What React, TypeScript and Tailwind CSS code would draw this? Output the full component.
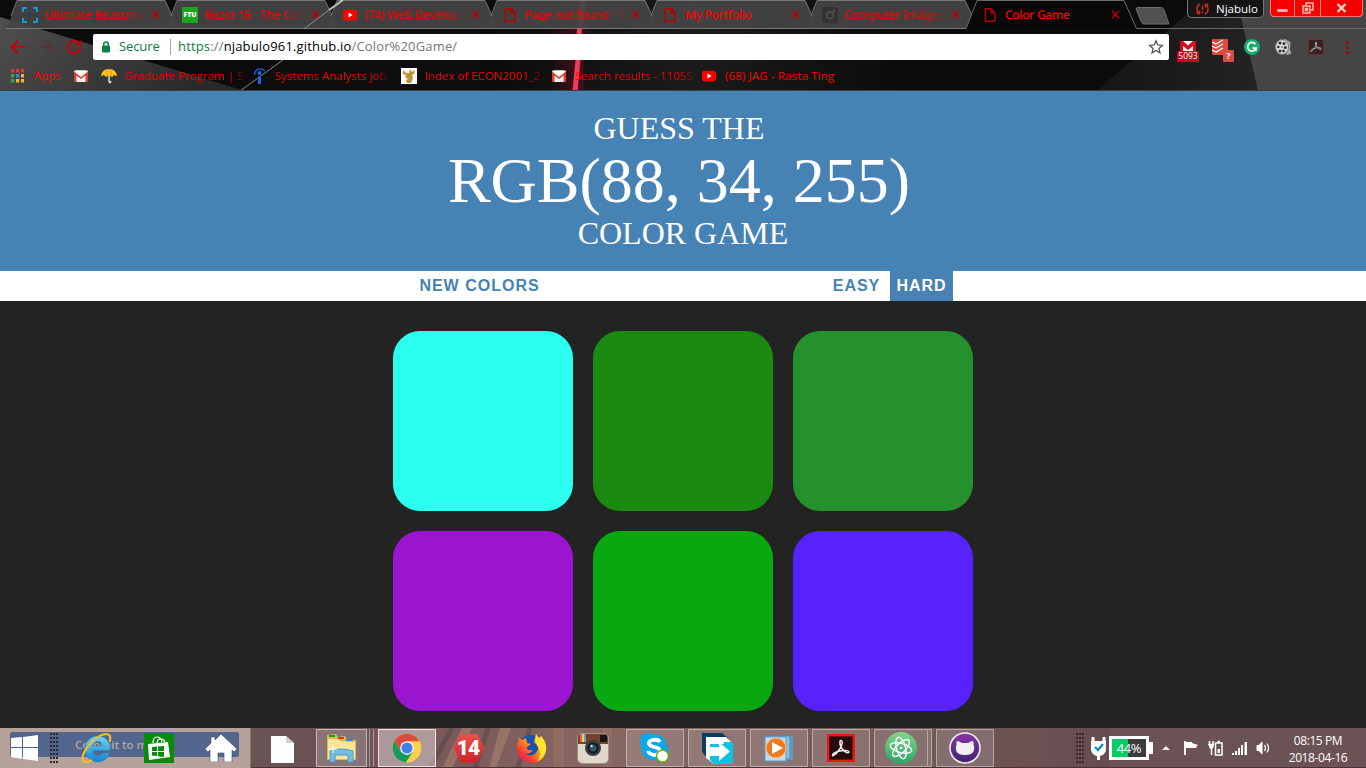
import React from "react";

const ui = "font-['Open_Sans','Noto_Sans',sans-serif]";

/* ---------- browser artwork ---------- */

function ThemeArt() {
  return (
    <svg className="absolute inset-0" width="1366" height="91" viewBox="0 0 1366 91" aria-hidden="true">
      <defs>
        <linearGradient id="leftShade" x1="0" x2="1" y1="0" y2="0.3">
          <stop offset="0" stopColor="#505050" />
          <stop offset="1" stopColor="#292929" />
        </linearGradient>
        <linearGradient id="midShade" x1="0" x2="1">
          <stop offset="0" stopColor="#0c0b0b" />
          <stop offset="0.5" stopColor="#1b1b1b" />
          <stop offset="1" stopColor="#0b0b0b" />
        </linearGradient>
        <linearGradient id="rightShade" x1="0" x2="1">
          <stop offset="0" stopColor="#151515" />
          <stop offset="1" stopColor="#2c2c2c" />
        </linearGradient>
        <linearGradient id="glow" x1="0" x2="1">
          <stop offset="0" stopColor="#a0001c" stopOpacity="0" />
          <stop offset="0.75" stopColor="#a00820" stopOpacity="0.35" />
          <stop offset="1" stopColor="#500814" stopOpacity="0" />
        </linearGradient>
      </defs>
      <rect width="1366" height="91" fill="#0c0b0b" />
      <path d="M0 17 L245 91 H0Z" fill="url(#leftShade)" />
      <path d="M245 91 L330 26 H480 V91Z" fill="#0e0e0e" />
      <path d="M480 0H860L910 91H480Z" fill="url(#midShade)" />
      <path d="M1204 0 H1366 V91 H1096Z" fill="url(#rightShade)" />
      <path d="M1237 0 H1366 V91 H1258Z" fill="#454545" />
      <path d="M548 0H592V34H548ZM555 60H584V91H550Z" fill="url(#glow)" />
      <path d="M583 0 L579 34 M578 60 L575 91" stroke="#ee3c5c" strokeWidth="5" />
      <path d="M329 10 L304 29" stroke="#a9a9a9" />
      <path d="M283 60 L240 91" stroke="#8a8a8a" />
      <path d="M0 90.5H1366" stroke="#2e4558" />
    </svg>
  );
}

function PageIcon() {
  return (
    <svg width="16" height="16" viewBox="0 0 16 16" fill="none" stroke="#b50000" strokeWidth="1.4">
      <path d="M3.2 1.7H9.3L12.8 5.5V14.3H3.2ZM9 2V6H12.6" />
    </svg>
  );
}
function YouTubeIcon() {
  return (
    <svg width="16" height="16" viewBox="0 0 16 16">
      <rect x="1" y="2.8" width="14" height="10.6" rx="2.6" fill="#f00" />
      <path d="M6.5 5.6 10.6 8.1 6.5 10.6Z" fill="#fff" />
    </svg>
  );
}
function GmailIcon() {
  return (
    <svg width="16" height="16" viewBox="0 0 16 16">
      <rect x="1" y="2.5" width="14" height="11.5" rx="1" fill="#eee" />
      <path d="M1 3.5 8 9.2 15 3.5V14H12.6V7.4L8 11 3.4 7.4V14H1Z" fill="#dc3a32" />
      <path d="M2.5 2.6 8 7 13.5 2.6Z" fill="#fff" />
    </svg>
  );
}
function BracketIcon() {
  return (
    <svg width="16" height="16" viewBox="0 0 16 16" fill="none" stroke="#129bd3" strokeWidth="2">
      <path d="M1 5V1H5M11 1H15V5M15 11V15H11M5 15H1V11" />
      <path d="M6 5 11 8 6 11Z" fill="#213f63" stroke="none" />
    </svg>
  );
}
function FtuIcon() {
  return (
    <span className="flex h-4 w-4 items-center justify-center bg-[#18a51d] text-[7px] font-extrabold leading-none text-white">
      FTU
    </span>
  );
}
function DimCameraIcon() {
  return (
    <svg width="16" height="16" viewBox="0 0 16 16" fill="none">
      <rect width="16" height="16" rx="3" fill="#333" />
      <circle cx="8" cy="8.3" r="3.2" stroke="#515151" strokeWidth="1.6" />
      <path d="M11 3h2v2h-2z" fill="#515151" />
    </svg>
  );
}

interface TabInfo {
  title: string;
  icon: React.ReactNode;
  fade?: boolean;
}
const tabs: TabInfo[] = [
  { title: "Ultimate Beastmas", icon: <BracketIcon />, fade: true },
  { title: "React 16 - The Con", icon: <FtuIcon />, fade: true },
  { title: "(74) Web Develop", icon: <YouTubeIcon />, fade: true },
  { title: "Page not found · G", icon: <PageIcon />, fade: true },
  { title: "My Portfolio", icon: <PageIcon /> },
  { title: "Computer Images", icon: <DimCameraIcon />, fade: true },
];

function CloseMark() {
  return (
    <svg width="9" height="9" viewBox="0 0 9 9" stroke="#c00000" strokeWidth="1.4">
      <path d="M.8.8 8.2 8.2M8.2.8.8 8.2" />
    </svg>
  );
}

function Tab({ tab, active }: { tab: TabInfo; active?: boolean }) {
  return (
    <div className="relative h-[29px] w-40 shrink-0">
      <svg className="absolute -left-px top-0 overflow-visible" width="174" height="29" viewBox="0 0 174 29" fill="none">
        {active ? (
          <>
            <path d="M1 29 12 .5H159L171.5 29Z" fill="#090909" />
            <path d="M1 28.5 12 .5H159L171.5 28.5H402" stroke="#6a6a6a" />
          </>
        ) : (
          <>
            <path d="M5 20 12.5 .5H160L166 14.5 171 28.5H1Z" fill="#454545" fillOpacity="0.93" />
            <path d="M6 16 12 .5H160L173 28.5H1" stroke="#777" />
          </>
        )}
      </svg>
      <div className="relative flex h-[29px] items-center pl-4">
        <span className="flex w-[23px]">{tab.icon}</span>
        <span
          className={`w-[106px] whitespace-nowrap font-['Noto_Sans','Open_Sans',sans-serif] text-[12px] font-medium leading-4 tracking-[-0.3px] text-[#ff0000] [font-stretch:87.5%] [text-rendering:geometricPrecision] ${tab.fade ? "[mask-image:linear-gradient(to_right,#000_74%,transparent_96%)]" : ""}`}
        >
          {tab.title}
        </span>
        <span>
          <CloseMark />
        </span>
      </div>
    </div>
  );
}

function WindowControls() {
  return (
    <div className="absolute right-0 top-0 flex items-start">
      <div className="flex h-[18px] w-[77px] items-center rounded-b-[5px] border border-t-0 border-[#777] bg-[#151515] pl-[7px] text-[11.5px] text-white">
        <svg width="15" height="14" viewBox="0 0 15 14" fill="none" stroke="#d02b20" strokeWidth="1.5">
          <path d="M5 2C1 4 1 9 4 11.5M1.5 11.5H4.5V8.5M10 12C14 10 14 5 11 2.5M13.5 2.5H10.5V5.5M7.5 3.5V8M7.5 9.5V11" />
        </svg>
        <span className="ml-[6px]">Njabulo</span>
      </div>
      <div className="ml-[6px] mr-[3px] flex h-[17px] w-[93px] overflow-hidden rounded-b-[4px] border border-t-0 border-[#ff7770] bg-[#f80000]">
        <span className="flex w-6 items-center justify-center border-r border-[#ff8a84] pt-1">
          <span className="h-[3px] w-[11px] rounded-sm bg-[#ffb4a8]" />
        </span>
        <span className="flex w-[26px] items-center justify-center border-r border-[#ff8a84]">
          <svg width="12" height="12" viewBox="0 0 12 12" fill="none" stroke="#ffc2b5" strokeWidth="1.5">
            <path d="M4 3.5V1H11V8H8.5" />
            <path d="M1 4H8V11H1ZM3.5 6.5H5.5V8.5H3.5Z" />
          </svg>
        </span>
        <span className="flex flex-1 items-center justify-center">
          <svg width="11" height="10" viewBox="0 0 11 10" stroke="#ffd4cb" strokeWidth="2.4">
            <path d="M1.5 1 9.5 9M9.5 1 1.5 9" />
          </svg>
        </span>
      </div>
    </div>
  );
}

function Extensions() {
  return (
    <div className="flex h-[26px] flex-1 items-center">
      <div className="relative ml-[8px] flex h-[22px] w-[22px] flex-col items-center">
        <svg className="mt-[5px]" width="16" height="11" viewBox="0 0 16 11">
          <path d="M0 0H16V11H0Z" fill="#eee" />
          <path d="M0 0H3L8 4.5 13 0H16V11H13V5L8 9 3 5V11H0Z" fill="#d20d22" />
        </svg>
        <span className="absolute left-0 top-[15px] flex h-[11px] w-[22px] items-center justify-center rounded-[1px] bg-[#cf0018] text-[8.5px] leading-none text-white">
          5093
        </span>
      </div>
      <div className="relative ml-[13px] h-[22px] w-[22px]">
        <svg className="mt-[3px]" width="16" height="16" viewBox="0 0 16 16" fill="none">
          <rect width="16" height="16" rx="1" fill="#df493e" />
          <path d="M0 3 4 5 11 1M0 7 4 9 11 5M0 11 4 13 11 9" stroke="#fff" strokeWidth="1.3" />
        </svg>
        <span className="absolute left-[11px] top-[14px] flex h-[12px] w-[11px] items-center justify-center rounded-[1px] bg-[#dc4d43] text-[8px] font-bold text-white">
          ?
        </span>
      </div>
      <svg className="ml-[10px]" width="16" height="16" viewBox="0 0 16 16" fill="none">
        <circle cx="8" cy="8" r="8" fill="#16ae6d" />
        <path d="M11.4 5.2A4.3 4.3 0 1 0 12 9.2H8.5M11.9 9V12" stroke="#fff" strokeWidth="1.7" />
      </svg>
      <svg className="ml-[15px]" width="17" height="16" viewBox="0 0 17 16" fill="none">
        <path d="M9 1 14 4 13 14 16 13" stroke="#aaa" strokeWidth="3" />
        <ellipse cx="7" cy="8" rx="6.5" ry="7.4" fill="#ddd" stroke="#777" />
        <g fill="#333">
          <circle cx="5" cy="4" r="1.5" />
          <circle cx="9" cy="4.5" r="1.5" />
          <circle cx="3.3" cy="8" r="1.3" />
          <circle cx="10.4" cy="8.5" r="1.5" />
          <circle cx="5" cy="12" r="1.5" />
          <circle cx="8.5" cy="12" r="1.4" />
          <circle cx="7" cy="8" r=".8" />
        </g>
      </svg>
      <svg className="ml-[16px]" width="16" height="16" viewBox="0 0 24 24" fill="none">
        <rect x=".8" y=".8" width="22.4" height="22.4" fill="#352323" stroke="#7c2c28" strokeWidth="1.5" />
        <path d="M11 5C14 3 13 9 10 13 7 18 3 21 4 17 6 14 20 11 20 15 19 18 11 11 11 5Z" stroke="#aaa" strokeWidth="1.5" />
      </svg>
      <div className="ml-[22px] flex flex-col gap-[2px]">
        <i className="h-[3px] w-[3px] rounded-full bg-[#b00000]" />
        <i className="h-[3px] w-[3px] rounded-full bg-[#b00000]" />
        <i className="h-[3px] w-[3px] rounded-full bg-[#b00000]" />
      </div>
    </div>
  );
}

function Toolbar() {
  return (
    <div className="relative mt-[5px] flex h-[26px] items-center">
      <div className="flex w-[93px] items-center pl-[10px]">
        <svg width="16" height="16" viewBox="0 0 16 16" fill="none" stroke="#c80000" strokeWidth="2">
          <path d="M15 8H2M8 1.5 1.7 8 8 14.5" />
        </svg>
        <svg className="ml-3 opacity-30" width="16" height="16" viewBox="0 0 16 16" fill="none" stroke="#8a1010" strokeWidth="1.8">
          <path d="M1 8H14M8 1.5 14.3 8 8 14.5" />
        </svg>
        <svg className="ml-3" width="16" height="16" viewBox="0 0 16 16" fill="none" stroke="#c80000" strokeWidth="2">
          <path d="M13.3 4.7A6.2 6.2 0 1 0 14.2 9.3" />
          <path d="M15 1V7H9Z" fill="#c80000" stroke="none" />
        </svg>
      </div>
      <div className="flex h-[26px] w-[1076px] items-center rounded-[2px] bg-white pl-[8px] pr-[5px] text-[13px]">
        <svg width="10" height="12" viewBox="0 0 10 12" fill="none">
          <rect x="1" y="4.5" width="8" height="7" rx="1" fill="#0b8043" />
          <path d="M2.7 5V3.2a2.3 2.3 0 0 1 4.6 0V5" stroke="#0b8043" strokeWidth="1.5" />
        </svg>
        <span className="ml-[8px] w-[42px] tracking-[-0.1px] text-[#0b8043]">Secure</span>
        <span className="ml-[9px] mr-[7px] h-4 w-px bg-[#aaa]" />
        <span className="whitespace-nowrap tracking-[0.16px] text-[#777]">
          <span className="text-[#0b8043]">https</span>://<span className="text-black">njabulo961.github.io</span>/Color%20Game/
        </span>
        <svg className="ml-auto" width="16" height="16" viewBox="0 0 16 16" fill="none" stroke="#555" strokeWidth="1.3">
          <path d="M8 1.8 9.8 6 14.4 6.4 10.9 9.4 12 13.9 8 11.5 4 13.9 5.1 9.4 1.6 6.4 6.2 6Z" />
        </svg>
      </div>
      <Extensions />
    </div>
  );
}

function AppsIcon() {
  const colors = ["#dc3b32", "#dc3b32", "#dc3b32", "#27a65a", "#3f81d8", "#f0b42d", "#27a65a", "#f0b42d", "#f0b42d"];
  return (
    <svg width="13" height="14" viewBox="0 0 13 14">
      {colors.map((c, i) => (
        <rect key={i} x={(i % 3) * 5} y={Math.floor(i / 3) * 5} width="3.3" height="3.5" fill={c} />
      ))}
    </svg>
  );
}

function Bookmark({ icon, label, width, fade }: { icon: React.ReactNode; label?: string; width: string; fade?: boolean }) {
  return (
    <div className={`flex shrink-0 items-center ${width}`}>
      <span className="flex w-6 shrink-0">{icon}</span>
      {label && (
        <span className={`whitespace-nowrap ${fade ? "[mask-image:linear-gradient(to_right,#000_88%,transparent_104%)]" : ""}`}>
          {label}
        </span>
      )}
    </div>
  );
}

function BookmarksBar() {
  return (
    <div className="relative flex h-8 items-center pl-[11px] text-[11.5px] text-[#ff0000]">
      <div className="flex w-[62px] items-center">
        <AppsIcon />
        <span className="ml-[10px]">Apps</span>
      </div>
      <Bookmark width="w-7" icon={<GmailIcon />} />
      <Bookmark
        width="w-[150px]"
        label="Graduate Program | S"
        fade
        icon={
          <svg width="16" height="16" viewBox="0 0 16 16" fill="none">
            <path d="M8 4V13.5Q9 16 10 13" stroke="#ddd" strokeWidth="1.5" />
            <path d="M0 8Q1 1 8 1 15 1 16 8L13 7 11 9 8 7 5 9 3 7Z" fill="#ffc619" />
            <path d="M5 9Q5 3 8 1 11 3 11 9" stroke="#f39a0a" />
          </svg>
        }
      />
      <Bookmark
        width="w-[150px]"
        label="Systems Analysts job"
        fade
        icon={
          <svg width="16" height="16" viewBox="0 0 16 16" fill="none">
            <path d="M3.5 7Q4 1 9 1 12 1 14 3" stroke="#1455cb" strokeWidth="1.6" />
            <circle cx="8.5" cy="5" r="2" fill="#2164f3" />
            <path d="M7 8Q8.5 9 10 8V16H7Z" fill="#2164f3" />
          </svg>
        }
      />
      <Bookmark
        width="w-[150px]"
        label="Index of ECON2001_2"
        fade
        icon={
          <svg width="16" height="16" viewBox="0 0 16 16">
            <rect width="16" height="16" fill="#fff" />
            <path d="M2 2 5 5H8L9 1 11 4 14 2 13 6 11 7 12 10 10 15H6L5 12 7 11 4 9 5 7 2 6Z" fill="#bd923a" />
          </svg>
        }
      />
      <Bookmark width="w-[150px]" label="Search results - 11055" fade icon={<GmailIcon />} />
      <div className="tracking-[0.15px]">
        <Bookmark width="w-[150px]" label="(68) JAG - Rasta Ting" icon={<YouTubeIcon />} />
      </div>
    </div>
  );
}

function BrowserChrome() {
  return (
    <div className={`relative h-[91px] overflow-hidden ${ui}`}>
      <ThemeArt />
      <div className="relative flex h-[29px] pl-[6px]">
        {tabs.map((t) => (
          <Tab key={t.title} tab={t} />
        ))}
        <Tab active tab={{ title: "Color Game", icon: <PageIcon /> }} />
        <svg className="ml-[9px] mt-[7px]" width="35" height="18" viewBox="0 0 35 18">
          <path d="M2 .5H26Q28 .5 29 3L34 17H9Q7 17 6 14L1 2Z" fill="#505050" stroke="#6d6d6d" />
        </svg>
        <svg className="absolute left-[303px] top-0" width="41" height="29" viewBox="0 0 41 29" stroke="#c4c4c4">
          <path d="M40 0 26 10" strokeWidth="1.8" />
          <path d="M26 10 1 29" strokeOpacity=".55" />
        </svg>
        <WindowControls />
      </div>
      <Toolbar />
      <BookmarksBar />
    </div>
  );
}

/* ---------- color game ---------- */

const squares = ["bg-[#2cfff0]", "bg-[#1a8a10]", "bg-[#24912c]", "bg-[#9b14cf]", "bg-[#08a910]", "bg-[#5822ff]"];

function ColorGame() {
  return (
    <main className="h-[637px] overflow-hidden bg-[#232323]">
      <h1 className="h-[180px] bg-[#4682b4] pt-5 text-center font-['Liberation_Serif',serif] text-[32px] font-normal uppercase leading-[35px] text-white">
        <span className="block pr-2">Guess the</span>
        <span className="block pr-2 text-[64px] leading-[70px]">RGB(88, 34, 255)</span>
        <span className="block">Color Game</span>
      </h1>
      <nav className="flex h-[30px] justify-center bg-white font-['Liberation_Sans',sans-serif] text-[16px] font-bold leading-[28px] tracking-[1px] text-[#4682b4]">
        <button className="mr-[281px] w-[132px] pl-px text-center">NEW COLORS</button>
        <button className="w-16 pr-[3px] text-center">EASY</button>
        <button className="w-[63px] bg-[#4682b4] text-center text-white">HARD</button>
      </nav>
      <div className="mx-auto mt-[30px] grid w-[580px] grid-cols-3 gap-5">
        {squares.map((c) => (
          <div key={c} className={`h-[180px] rounded-[27px] ${c}`} />
        ))}
      </div>
    </main>
  );
}

/* ---------- taskbar ---------- */

function Grip() {
  return (
    <div className="grid grid-cols-3 gap-x-[1px] gap-y-[2px]">
      {Array.from({ length: 24 }, (_, i) => (
        <i key={i} className="h-[2px] w-[2px] bg-[#302527]" />
      ))}
    </div>
  );
}

function Slot({ children, framed, active }: { children: React.ReactNode; framed?: boolean; active?: boolean }) {
  return (
    <div className="flex h-10 w-[62px] shrink-0 items-center justify-center">
      <div
        className={`flex h-[38px] w-[58px] items-center justify-center ${active ? "border border-[#eee5e1] bg-white/40" : framed ? "border border-white/40 bg-white/15" : ""}`}
      >
        {children}
      </div>
    </div>
  );
}

function IeIcon() {
  return (
    <svg width="32" height="32" viewBox="0 0 32 32" fill="none">
      <defs>
        <linearGradient id="ieBlue" x2="0" y2="1">
          <stop stopColor="#6fd2f8" />
          <stop offset="1" stopColor="#1483cf" />
        </linearGradient>
      </defs>
      <path
        fillRule="evenodd"
        d="M17 4C24 4 29 9.5 29 16.5V18.5H11.5C12 22 14 23.5 17 23.5 19.5 23.5 21 22.5 22 21H28.5C27 26.5 22.5 30 17 30 9.5 30 4 24.5 4 17S9.5 4 17 4ZM11.5 14H22C21.5 11 19.5 9.5 17 9.5S12.2 11 11.5 14Z"
        fill="url(#ieBlue)"
        stroke="#2b86bd"
        strokeWidth=".5"
      />
      <path d="M28.5 10Q31 2 25 2 16 3 8 13-1 25 2.5 29 5 31.5 11 28" stroke="#f5bd24" strokeWidth="2.2" />
    </svg>
  );
}
function StoreIcon() {
  return (
    <svg width="30" height="30" viewBox="0 0 30 30" fill="none">
      <rect width="30" height="30" fill="#078c08" />
      <path d="M4 11 24 9 26 24 5 27Z" fill="#fff" />
      <path d="M9 10Q9 4 13 4 17 4 18 9M13 10Q14 5 17 6 20 6 21 9" stroke="#fff" strokeWidth="1.2" />
      <path d="M8 14 13 13.5V18H8ZM14 13.4 20 13V18H14ZM8 19H13V23L8 22.5ZM14 19H20V24L14 23.2Z" fill="#078c08" />
    </svg>
  );
}
function ExplorerIcon() {
  return (
    <svg width="33" height="30" viewBox="0 0 33 30">
      <path d="M2 2 11 1 13 4 20 3 22 6 31 7V27H2Z" fill="#d9b957" />
      <path d="M3 6H13L15 8 30 9V26H3Z" fill="#f9e497" />
      <path d="M4 2H10V4H4Z" fill="#15a529" />
      <path d="M13 4H19V6H13Z" fill="#d63b24" />
      <path d="M21 6H28V8H21Z" fill="#1c92dc" />
      <path d="M5 29V18Q16 14 28 18V29H23V22H10V29Z" fill="#76bde6" stroke="#4b9acb" />
      <path d="M8 12V20M4 16H12" stroke="#fff" />
    </svg>
  );
}
function ChromeIcon() {
  return (
    <svg width="30" height="30" viewBox="0 0 48 48">
      <circle cx="24" cy="24" r="23" fill="#ffd04b" />
      <path d="M4.1 12.5A23 23 0 0 1 44 13H24L14 30Z" fill="#dc4c3d" />
      <path d="M4.1 12.5A23 23 0 0 0 22 47L34 29 24 33 14 30Z" fill="#169b5b" />
      <circle cx="24" cy="24" r="11" fill="#f3f3f3" />
      <circle cx="24" cy="24" r="8.8" fill="#427fe4" />
    </svg>
  );
}
function FourteenIcon() {
  return (
    <span className="flex h-[29px] w-[31px] items-center justify-center bg-linear-to-b from-[#ef4f4d] to-[#cc2028] pr-0.5 font-['Roboto',sans-serif] text-[21px] font-black leading-none tracking-[-1px] text-white [clip-path:polygon(24%_0,76%_0,100%_50%,76%_100%,24%_100%,0_50%)]">
      14
    </span>
  );
}
function FirefoxIcon() {
  return (
    <svg width="31" height="31" viewBox="0 0 31 31">
      <defs>
        <linearGradient id="fox" x1="1" y1="0" x2="0" y2="1">
          <stop offset="0" stopColor="#fff339" />
          <stop offset=".45" stopColor="#ff9a18" />
          <stop offset=".75" stopColor="#f63338" />
          <stop offset="1" stopColor="#dc179b" />
        </linearGradient>
      </defs>
      <circle cx="15" cy="15" r="13" fill="#1652ae" />
      <path d="M2 4 6 7 10 5 11 10 15 11 11 14 11 16Q13 18 17 17 14 22 9 20 14 25 20 20 25 15 18 9L20 1Q21 4 24 5L25 3Q31 10 30 17 28 30 15 30 2 28 1 16 0 10 3 8Z" fill="url(#fox)" />
      <path d="M20 1Q21 4 24 5L25 3Q31 10 30 17 28 25 22 28 27 18 20 10Z" fill="#ffe52c" />
    </svg>
  );
}
function InstagramIcon() {
  return (
    <svg width="32" height="31" viewBox="0 0 32 31">
      <rect x=".5" y=".5" width="31" height="30" rx="5" fill="#e0d9cb" stroke="#9c948b" />
      <path d="M1 11V5Q1 1 5 1H27Q31 1 31 5V11Z" fill="#76422d" />
      <path d="M3 1H5V9H3Z" fill="#f45852" />
      <path d="M5 1H7V9H5Z" fill="#f7ce37" />
      <path d="M7 1H9V9H7Z" fill="#52a9cf" />
      <rect x="23" y="2" width="7" height="7" rx="1" fill="#151818" />
      <circle cx="16" cy="15" r="8" fill="#3a3c3d" />
      <circle cx="16" cy="15" r="5.5" fill="#11191d" />
      <circle cx="16" cy="15" r="3.5" fill="#35556a" />
      <circle cx="14.5" cy="13" r="1.3" fill="#b9d5e4" />
    </svg>
  );
}
function SkypeIcon() {
  return (
    <svg width="32" height="32" viewBox="0 0 32 32" fill="none">
      <circle cx="15" cy="15" r="13" fill="#08a8e8" />
      <circle cx="9" cy="9" r="8" fill="#08a8e8" />
      <circle cx="22" cy="21" r="8" fill="#08a8e8" />
      <path d="M21 10Q19 7 14 8 9 9 10 12 11 14 15 15 21 16 21 19 20 23 15 23 10 22 9 19" stroke="#fff" strokeWidth="3.8" />
      <circle cx="23.5" cy="24" r="6" fill="#fff" stroke="#68ad12" strokeWidth="1.5" />
    </svg>
  );
}
function ArrowAppIcon() {
  return (
    <svg width="31" height="31" viewBox="0 0 31 31">
      <path d="M0 0H20L26 5 4 4 5 25 0 19Z" fill="#083f60" />
      <path d="M26 6 31 11V31H12L4 25V4H24Z" fill="#fff" />
      <path d="M8 9H30L31 11V31H12L8 27V23H17V28L28 18.5 17 9V14H8Z" fill="#0cc4e2" />
      <path d="M5 8H22V11H8V23H5Z" fill="#fff" />
      <path d="M7 15H17V10.5L27 18.5 17 26.5V22H7Z" fill="#fff" />
    </svg>
  );
}
function MediaIcon() {
  return (
    <svg width="30" height="28" viewBox="0 0 30 28">
      <path d="M8 2H29V26H8Z" fill="#629cc6" />
      <path d="M4 2H26V25H4Z" fill="#92bcd8" stroke="#478ab9" />
      <path d="M1 3H22V27H1Z" fill="#bedaec" stroke="#5b9bc5" />
      <circle cx="12" cy="14" r="10" fill="#ef791c" stroke="#ffc184" />
      <path d="M8 8 19 14 8 20Z" fill="#fff" />
    </svg>
  );
}
function AcrobatIcon() {
  return (
    <svg width="28" height="28" viewBox="0 0 28 28" fill="none">
      <rect x="1.2" y="1.2" width="25.6" height="25.6" fill="#260c0c" stroke="#e91b0c" strokeWidth="2.4" />
      <path d="M13 7C15 5 17 9 12 16 8 22 4 23 6 20 8 17 22 15 22 18 20 21 12 14 13 7Z" stroke="#eee" strokeWidth="1.5" />
    </svg>
  );
}
function AtomIcon() {
  return (
    <svg width="32" height="32" viewBox="0 0 32 32" fill="none">
      <defs>
        <linearGradient id="atomGreen" x2="0" y2="1">
          <stop stopColor="#85d58b" />
          <stop offset="1" stopColor="#28a666" />
        </linearGradient>
      </defs>
      <circle cx="16" cy="16" r="16" fill="url(#atomGreen)" />
      <g stroke="#fff" strokeWidth="1.4">
        <ellipse cx="16" cy="16" rx="11" ry="4.5" transform="rotate(15 16 16)" />
        <ellipse cx="16" cy="16" rx="11" ry="4.5" transform="rotate(75 16 16)" />
        <ellipse cx="16" cy="16" rx="11" ry="4.5" transform="rotate(135 16 16)" />
      </g>
      <circle cx="16" cy="16" r="1.3" fill="#fff" />
    </svg>
  );
}
function GithubIcon() {
  return (
    <svg width="32" height="32" viewBox="0 0 32 32">
      <defs>
        <linearGradient id="catPurple" x2="0" y2="1">
          <stop stopColor="#8b35a8" />
          <stop offset="1" stopColor="#41236f" />
        </linearGradient>
      </defs>
      <circle cx="16" cy="16" r="15" fill="url(#catPurple)" stroke="#eee" strokeWidth="1.6" />
      <path d="M8 9Q10 9 13 11H19Q22 9 24 9 25 11 24.5 13 26 15 25 18 24 23 16 23 8 23 7 18 6 15 7.5 13 7 11 8 9Z" fill="#f2eff2" />
    </svg>
  );
}

function Tray() {
  return (
    <div className="ml-auto flex h-10 items-center pr-[17px] text-white">
      <Grip />
      <svg className="ml-[6px]" width="17" height="24" viewBox="0 0 17 24" fill="none">
        <path d="M3 1V6M14 1V6" stroke="#fff" strokeWidth="3" />
        <path d="M1 5H16V14Q15 19 10 20V24H7V20Q2 19 1 14Z" fill="#fff" />
        <path d="M5 11 8 14 13 8" stroke="#1592b4" strokeWidth="2.4" />
      </svg>
      <div className="ml-[2px] flex h-6 w-10 items-center justify-center border-[3px] border-white bg-[linear-gradient(to_right,#09cc62_46%,#3b3a3c_46%)] text-[13px] leading-none tracking-[-0.4px]">
        44%
      </div>
      <span className="h-3 w-1 bg-white" />
      <span className="ml-[9px] h-[4px] w-[8px] bg-[#eee] [clip-path:polygon(50%_0,100%_100%,0_100%)]" />
      <svg className="ml-[14px]" width="16" height="16" viewBox="0 0 16 16">
        <path d="M0 1H2V15H0ZM2 2H8V3L14 5 12 7 13 8H8L7 8H2Z" fill="#fff" />
      </svg>
      <svg className="ml-[8px]" width="15" height="16" viewBox="0 0 15 16" fill="none">
        <path d="M1.5 1V4M5 1V4M0 4.5H6M3.5 5V15" stroke="#fff" strokeWidth="1.5" />
        <path d="M1 5H5.5V7Q5 9 3.3 9 1 8.5 1 7Z" fill="#fff" />
        <path d="M7.5 3H14V15H7.5ZM9.5 1.5H12" stroke="#fff" strokeWidth="1.5" />
        <path d="M9.5 9H12V13H9.5Z" fill="#fff" />
      </svg>
      <svg className="ml-[9px]" width="16" height="13" viewBox="0 0 16 13" fill="#fff">
        <path d="M0 11H2V13H0ZM3 9H5V13H3ZM6 6H8V13H6ZM9 3H11V13H9ZM12.5 0H15V13H12.5Z" />
      </svg>
      <svg className="ml-[8px]" width="15" height="14" viewBox="0 0 15 14" fill="none" stroke="#fff">
        <path d="M1 4.5H3L6 1V13L3 9.5H1Z" fill="#fff" />
        <path d="M8.5 4Q10.5 7 8.5 10M11 2.5Q14 7 11 11.5" strokeWidth="1.2" />
      </svg>
      <div className="ml-[16px] w-[62px] pt-px text-center text-[12px] leading-[17px] tracking-[-0.4px]">
        <div>08:15 PM</div>
        <div>2018-04-16</div>
      </div>
    </div>
  );
}

function Taskbar() {
  return (
    <footer className={`relative flex h-10 overflow-hidden bg-[#6b5255] ${ui}`}>
      <svg className="absolute left-0 top-0" width="1366" height="40" viewBox="0 0 1366 40" aria-hidden="true">
        <defs>
          <linearGradient id="woodBand" x2="1">
            <stop stopColor="#735356" />
            <stop offset=".3" stopColor="#876761" />
            <stop offset="1" stopColor="#664d50" />
          </linearGradient>
        </defs>
        <path d="M372 0H1110V40H372Z" fill="url(#woodBand)" />
        <path d="M442 40 462 0H472L452 40ZM489 40 500 0H511L496 40Z" fill="#b28a72" fillOpacity=".5" />
        <path d="M553 0H564V40H553ZM603 0H612V40H603Z" fill="#a77c68" fillOpacity=".3" />
        <path d="M430 40 452 0M475 40 488 0M518 40 530 0" stroke="#503d43" strokeWidth="5" strokeOpacity=".45" />
        <path d="M0 39.5H1366" stroke="#4d3031" />
      </svg>
      <div className="relative flex w-[251px] items-center border-r border-[#668d5d] bg-[#b6a19b]">
        <div className="absolute left-[10px] top-1 flex h-[25px] w-[229px] items-center rounded-[2px] bg-[#52658c] pl-[65px] text-[11.5px] font-semibold text-[#b5a7a6]">
          Commit to master
        </div>
        <div className="absolute left-[145px] top-1 h-[25px] w-[90px] bg-[#52658c]" />
        <svg className="relative ml-[11px]" width="27" height="26" viewBox="0 0 27 26">
          <path d="M0 3 11 2V12H0ZM12 2 27 0V12H12ZM0 13H11V24L0 22ZM12 13H27V26L12 24Z" fill="#fff" />
        </svg>
        <div className="relative ml-[12px]">
          <Grip />
        </div>
        <div className="relative ml-[23px]">
          <IeIcon />
        </div>
        <div className="relative ml-[31px]">
          <StoreIcon />
        </div>
        <svg className="relative ml-[31px]" width="32" height="28" viewBox="0 0 32 28">
          <path d="M16 0 32 15 29 18 27 16V28H19V19H13V28H5V16L3 18 0 15 6 9V3H10V6Z" fill="#fff" stroke="#404c66" strokeWidth=".6" />
        </svg>
      </div>
      <div className="relative flex w-[65px] items-center pl-5 pt-0.5">
        <svg width="23" height="27" viewBox="0 0 23 27">
          <path d="M0 0H15L23 7V27H0Z" fill="#fdfdfd" />
          <path d="M15 0V7H23Z" fill="#d2d0d0" />
        </svg>
      </div>
      <div className="relative flex w-[60px] items-center">
        <div className="flex h-[38px] w-[51px] items-center justify-center border border-white/50 bg-white/20">
          <ExplorerIcon />
        </div>
        <span className="h-[38px] w-[3px] border-r border-white/40" />
        <span className="h-[38px] w-[4px] border-r border-white/40" />
      </div>
      <div className="relative flex">
        <Slot active>
          <ChromeIcon />
        </Slot>
        <Slot>
          <FourteenIcon />
        </Slot>
        <Slot>
          <FirefoxIcon />
        </Slot>
        <Slot>
          <InstagramIcon />
        </Slot>
        <Slot framed>
          <SkypeIcon />
        </Slot>
        <Slot framed>
          <ArrowAppIcon />
        </Slot>
        <Slot framed>
          <MediaIcon />
        </Slot>
        <Slot framed>
          <AcrobatIcon />
        </Slot>
        <div className="relative flex h-10 w-[62px] items-center pl-0.5">
          <div className="flex h-[38px] w-[54px] items-center justify-center border border-white/40 bg-white/15">
            <AtomIcon />
          </div>
          <span className="h-[38px] w-[4px] border-y border-r border-white/40 bg-white/15" />
        </div>
        <Slot framed>
          <GithubIcon />
        </Slot>
      </div>
      <div className="relative ml-auto">
        <Tray />
      </div>
    </footer>
  );
}

export default function App() {
  return (
    <div className="h-[768px] w-[1366px] overflow-hidden">
      <BrowserChrome />
      <ColorGame />
      <Taskbar />
    </div>
  );
}
